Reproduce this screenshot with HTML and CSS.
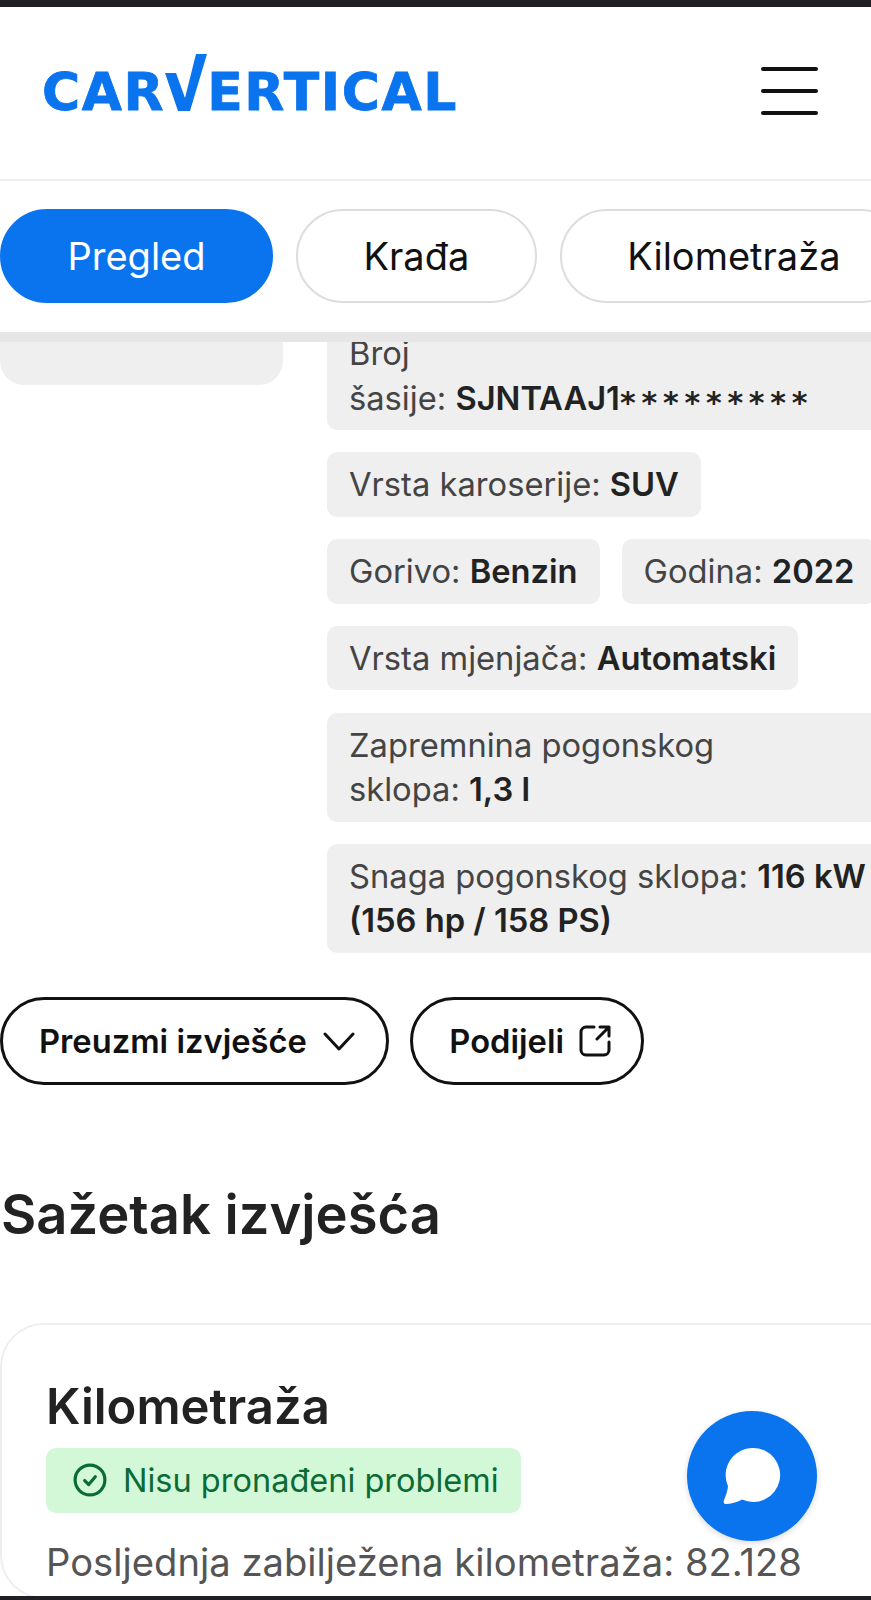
FILE: index.html
```html
<!DOCTYPE html>
<html>
<head>
    <title>carVertical</title>
    <link rel="stylesheet" href="styles.css">
</head>
<body>
    <div class="status-bar"></div>

    <header class="header">
        <div class="logo">
            <span>CAR</span>
            <svg class="logo-v" viewBox="0 0 42 57" aria-label="V"><path d="M0 19h11l9 25L31 0h11L25 57H13z"/></svg>
            <span>ERTICAL</span>
        </div>
        <div class="menu-btn"><span></span><span></span><span></span></div>
    </header>

    <nav class="tabs">
        <div class="tab active">Pregled</div>
        <div class="tab">Krađa</div>
        <div class="tab">Kilometraža</div>
    </nav>

    <main class="content">
        <div class="vehicle">
            <div class="photo"></div>
            <div class="specs">
                <div class="spec spec-first">
                    <div>Broj<br>šasije: <b>SJNTAAJ1<span class="mask">*********</span></b></div>
                </div>
                <div class="spec-row"><div class="spec">Vrsta karoserije: <b>SUV</b></div></div>
                <div class="spec-row">
                    <div class="spec">Gorivo: <b>Benzin</b></div>
                    <div class="spec">Godina: <b>2022</b></div>
                </div>
                <div class="spec-row"><div class="spec">Vrsta mjenjača: <b>Automatski</b></div></div>
                <div class="spec spec-wide">Zapremnina pogonskog<br>sklopa: <b>1,3 l</b></div>
                <div class="spec spec-wide">Snaga pogonskog sklopa: <b>116 kW<br>(156 hp / 158 PS)</b></div>
            </div>
        </div>

        <div class="actions">
            <button class="btn">
                Preuzmi izvješće
                <svg class="btn-icon" viewBox="0 0 32 32"><path d="M2 9l14 15L30 9"/></svg>
            </button>
            <button class="btn btn-share">
                Podijeli
                <svg class="btn-icon" viewBox="0 0 32 32"><path d="M15 2H7a5 5 0 0 0-5 5v18a5 5 0 0 0 5 5h18a5 5 0 0 0 5-5v-8M21 2h9v9M30 2L18 14"/></svg>
            </button>
        </div>

        <h2 class="summary-title">Sažetak izvješća</h2>

        <section class="card">
            <h3 class="card-title">Kilometraža</h3>
            <div class="badge">
                <svg class="badge-icon" viewBox="0 0 32 32"><circle cx="16" cy="16" r="14"/><path d="M11 16.5l3.8 3.8L21 13"/></svg>
                Nisu pronađeni problemi
            </div>
            <p class="card-text">Posljednja zabilježena kilometraža: 82.128</p>
        </section>
    </main>

    <div class="chat-btn">
        <svg viewBox="0 0 58 60"><path d="M30 2a27 27 0 1 1-11 51.6c-4 2.4-10 4-15 4.4-3 .2-4-1.5-3-4 2-4.5 3.5-9 4-14A27 27 0 0 1 30 2z"/></svg>
    </div>

    <div class="nav-bar"></div>
</body>
</html>
```

FILE: styles.css
```css
* {
    box-sizing: border-box;
}

html, body {
    height: 1600px;
    overflow: hidden;
}

body {
    position: relative;
    display: flex;
    flex-direction: column;
    margin: 0;
    font-family: 'Inter', sans-serif;
    color: #222;
    background-color: #fff;
}

.status-bar {
    flex: none;
    height: 7px;
    background-color: #202024;
}

.header {
    flex: none;
    display: flex;
    justify-content: space-between;
    align-items: center;
    height: 174px;
    padding: 0 53px 4px 42px;
    border-bottom: 2px solid #eee;
}

.logo {
    display: flex;
    align-items: flex-end;
    height: 58px;
    margin-bottom: 18px;
    font-family: 'DejaVu Sans', sans-serif;
    font-size: 52px;
    font-weight: 700;
    line-height: 38px;
    letter-spacing: 1.6px;
    color: #0a74ef;
    -webkit-text-stroke: 0.8px #0a74ef;
}

.logo-v {
    width: 42px;
    height: 57px;
    fill: #0a74ef;
}

.menu-btn {
    display: flex;
    flex-direction: column;
    gap: 18px;
    width: 57px;
}

.menu-btn span {
    height: 4px;
    background-color: #111;
    border-radius: 2px;
}

.tabs {
    flex: none;
    position: relative;
    z-index: 2;
    display: flex;
    gap: 23px;
    height: 161px;
    padding-top: 28px;
    background-color: #fff;
    border-bottom: 10px solid #e6e6e6;
    overflow: hidden;
}

.tab {
    flex: none;
    display: flex;
    justify-content: center;
    align-items: center;
    height: 94px;
    padding: 0 65.5px;
    font-size: 38px;
    color: #111;
    background-color: #fff;
    border: 2px solid #ddd;
    border-radius: 47px;
}

.tab.active {
    color: #fff;
    background-color: #0a74ef;
    border-color: #0a74ef;
}

.content {
    flex: 1;
    min-height: 0;
}

.vehicle {
    display: flex;
    gap: 44px;
    align-items: flex-start;
}

.photo {
    flex: none;
    width: 283px;
    height: 43px;
    background-color: #efefef;
    border-radius: 0 0 24px 24px;
}

.specs {
    flex: none;
    display: flex;
    flex-direction: column;
    gap: 22.3px;
    width: 560px;
}

.spec {
    flex: none;
    padding: 10px 22px;
    font-size: 32.7px;
    line-height: 44.5px;
    color: #444;
    white-space: nowrap;
    background-color: #efefef;
    border-radius: 10px;
}

.spec b {
    font-weight: 600;
    color: #222;
}

.mask {
    font-family: 'DejaVu Sans', sans-serif;
    font-size: 30px;
    line-height: 1;
    letter-spacing: 5.8px;
    vertical-align: -3px;
}

.spec-first {
    display: flex;
    align-items: flex-end;
    height: 88px;
    padding-top: 0;
    border-radius: 0 0 10px 10px;
}

.spec-row {
    display: flex;
    gap: 22px;
}

.spec-wide {
    width: 100%;
}

.actions {
    display: flex;
    gap: 21px;
    margin-top: 44px;
}

.btn {
    display: flex;
    align-items: center;
    gap: 16px;
    height: 88px;
    padding: 0 31.5px 0 36px;
    font-family: inherit;
    font-size: 32.7px;
    font-weight: 600;
    color: #111;
    background-color: #fff;
    border: 3px solid #111;
    border-radius: 44px;
}

.btn-share {
    gap: 15px;
    padding-right: 30px;
}

.btn-icon {
    width: 32px;
    height: 32px;
    fill: none;
    stroke: #111;
    stroke-width: 3;
    stroke-linecap: round;
    stroke-linejoin: round;
}

.summary-title {
    margin: 97px 0 0 1px;
    font-size: 54.3px;
    font-weight: 600;
    line-height: 64px;
}

.card {
    height: 276px;
    margin-top: 77px;
    margin-right: -60px;
    padding: 52px 44px 0;
    border: 2px solid #eee;
    border-radius: 44px;
}

.card-title {
    margin: 0;
    font-size: 49px;
    font-weight: 600;
    line-height: 60px;
}

.badge {
    display: flex;
    align-items: center;
    gap: 16px;
    width: fit-content;
    height: 65px;
    margin-top: 11px;
    padding: 0 22px 0 27px;
    font-size: 32.5px;
    color: #0b6b35;
    background-color: #d3f8d8;
    border-radius: 10px;
}

.badge-icon {
    width: 34px;
    height: 34px;
    fill: none;
    stroke: #0b6b35;
    stroke-width: 3;
    stroke-linecap: round;
    stroke-linejoin: round;
}

.card-text {
    margin: 27px 0 0;
    font-size: 38.2px;
    line-height: 44px;
    white-space: nowrap;
    color: #555;
}

.chat-btn {
    position: absolute;
    top: 1411px;
    left: 687px;
    display: flex;
    justify-content: center;
    align-items: center;
    width: 130px;
    height: 130px;
    background-color: #0a74ef;
    border-radius: 50%;
    box-shadow: 0 2px 6px rgba(0, 0, 0, 0.15);
}

.chat-btn svg {
    width: 58px;
    height: 60px;
    fill: #fff;
}

.nav-bar {
    position: absolute;
    left: 0;
    right: 0;
    bottom: 0;
    height: 4px;
    background-color: #202024;
}
```
